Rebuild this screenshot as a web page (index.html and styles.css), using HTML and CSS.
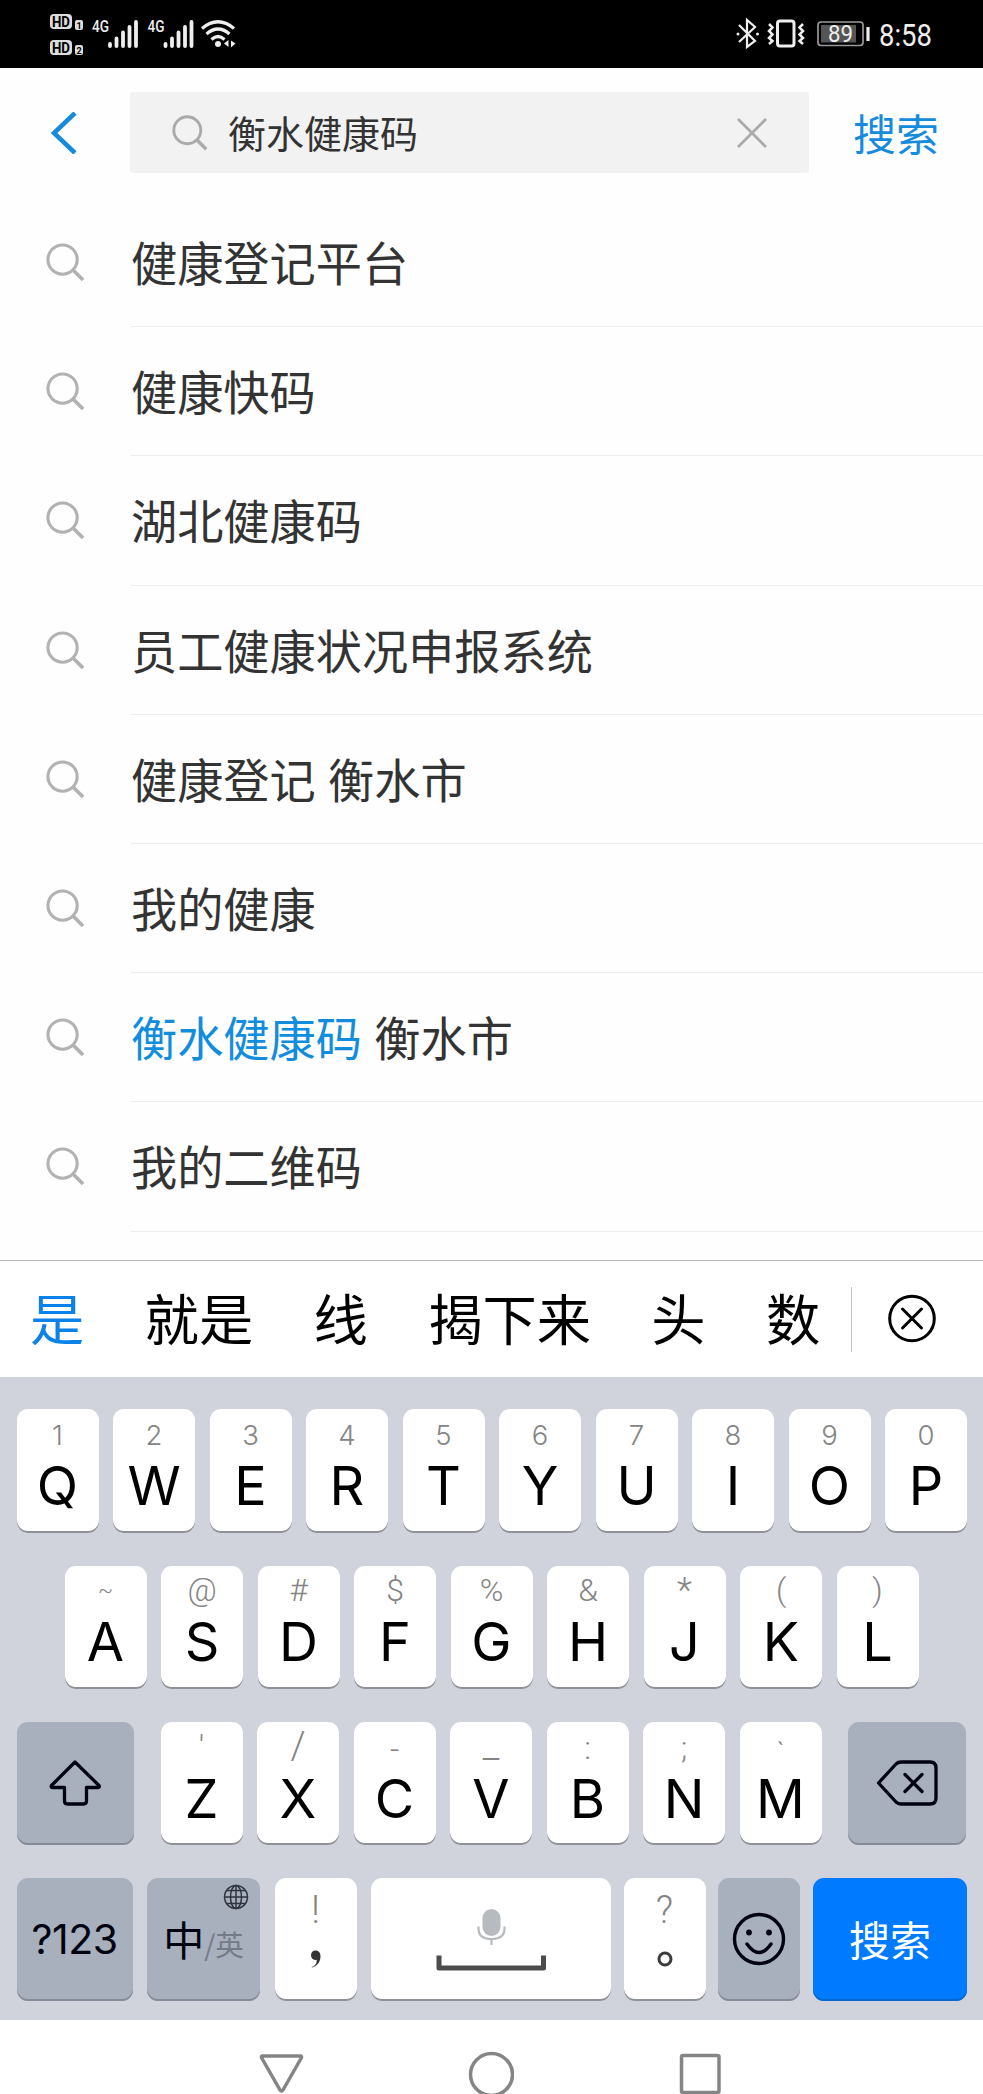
FILE: index.html
```html
<!DOCTYPE html>
<html lang="zh-CN">
<head>
<meta charset="utf-8">
<title>搜索</title>
<link rel="stylesheet" href="styles.css">
</head>
<body>
<svg class="defs" width="0" height="0" aria-hidden="true">
  <symbol id="lens" viewBox="0 0 40 40"><circle cx="17" cy="17" r="15" fill="none" stroke="currentColor" stroke-width="3.2"/><path d="M27.5 27.5L38 38" stroke="currentColor" stroke-width="3.8"/></symbol>
</svg>
<header class="status">
  <svg class="status-left" width="250" height="68" viewBox="0 0 250 68">
    <g fill="#ddd"><rect x="50" y="14" width="22" height="15" rx="4"/><rect x="50" y="40" width="22" height="15" rx="4"/><rect x="75" y="20" width="8" height="10" rx="2"/><rect x="75" y="45" width="8" height="10" rx="2"/></g>
    <g class="hd"><text x="52" y="26.500" textLength="18" lengthAdjust="spacingAndGlyphs">HD</text><text x="52" y="52.500" textLength="18" lengthAdjust="spacingAndGlyphs">HD</text><text class="sim" x="76.500" y="28.500">1</text><text class="sim" x="76.500" y="53.500">2</text></g>
    <g class="net"><text x="92" y="32" textLength="17" lengthAdjust="spacingAndGlyphs">4G</text><text x="147.500" y="32" textLength="17" lengthAdjust="spacingAndGlyphs">4G</text></g>
    <g stroke="#eee" stroke-width="3.800" stroke-linecap="round"><path d="M110 44v2M116.500 38.500V46M123 32.500V46M129.500 27V46M136 22V46"/><path d="M165.500 44v2M172 38.500V46M178.500 32.500V46M185 27V46M191.500 22V46"/></g>
    <g fill="none" stroke="#eee" stroke-width="3.200"><path d="M202 28.500Q218 15 234 28.500M206.500 34Q218 24 229.500 34M211.500 39.500Q218 33.500 224.500 39.500"/></g>
    <circle cx="218" cy="44" r="3" fill="#eee"/><path d="M228.500 40v7l-4.500-3.500zM231 40.500v7l4.500-4z" fill="#eee"/>
  </svg>
  <svg class="status-right" width="250" height="68" viewBox="733 0 250 68">
    <path d="M739 25l16 16-8 6V20l8 7-16 15" fill="none" stroke="#eee" stroke-width="2.200"/><circle cx="738" cy="34" r="1.500" fill="#eee"/><circle cx="757.500" cy="34" r="1.500" fill="#eee"/>
    <rect x="777.500" y="21" width="16.500" height="25" rx="2.500" fill="none" stroke="#eee" stroke-width="3"/>
    <path d="M769 24l3.500 3.500-3.500 3.500 3.500 3.500-3.500 3.500 3.500 3-3.500 3M803 24l-3.500 3.500 3.500 3.500-3.500 3.500 3.500 3.500-3.500 3 3.500 3" fill="none" stroke="#eee" stroke-width="2.500"/>
    <rect x="818" y="22" width="45" height="23.500" rx="3" fill="none" stroke="#999" stroke-width="1.700"/><rect x="821" y="25" width="35" height="17.500" fill="#555"/><path d="M868 27v14" stroke="#eee" stroke-width="3.200"/>
    <text class="battery" x="828" y="41.500" textLength="25" lengthAdjust="spacingAndGlyphs">89</text>
    <text class="clock" x="879" y="45.500" textLength="53" lengthAdjust="spacingAndGlyphs">8:58</text>
  </svg>
</header>
<div class="search-bar">
  <svg class="back" width="28" height="42" viewBox="0 0 28 42"><path d="M26 1L5 21l21 20" fill="none" stroke="#148bdc" stroke-width="4.500"/></svg>
  <div class="field">
    <svg class="field-lens" width="36" height="36"><use href="#lens"/></svg>
    <span class="query">衡水健康码</span>
    <svg class="clear" width="30" height="30" viewBox="0 0 30 30"><path d="M1 1l28 28M29 1L1 29" stroke="#aaa" stroke-width="2.700"/></svg>
  </div>
  <span class="submit">搜索</span>
</div>
<ul class="results">
  <li><svg class="lens"><use href="#lens"/></svg><span>健康登记平台</span></li>
  <li><svg class="lens"><use href="#lens"/></svg><span>健康快码</span></li>
  <li><svg class="lens"><use href="#lens"/></svg><span>湖北健康码</span></li>
  <li><svg class="lens"><use href="#lens"/></svg><span>员工健康状况申报系统</span></li>
  <li><svg class="lens"><use href="#lens"/></svg><span>健康登记 衡水市</span></li>
  <li><svg class="lens"><use href="#lens"/></svg><span>我的健康</span></li>
  <li><svg class="lens"><use href="#lens"/></svg><span><em>衡水健康码</em> 衡水市</span></li>
  <li><svg class="lens"><use href="#lens"/></svg><span>我的二维码</span></li>
</ul>
<div class="candidates">
  <span class="active">是</span><span>就是</span><span>线</span><span>揭下来</span><span>头</span><span>数</span>
  <i class="split"></i>
  <svg class="close" width="50" height="50" viewBox="0 0 50 50"><g fill="none" stroke="#000" stroke-width="3"><circle cx="25" cy="24.500" r="22.300"/><path d="M15.500 15l19 19M34.500 15l-19 19" stroke-linecap="round"/></g></svg>
</div>
<div class="keyboard">
  <div class="keys row1">
    <div class="key"><small>1</small><b>Q</b></div><div class="key"><small>2</small><b>W</b></div><div class="key"><small>3</small><b>E</b></div><div class="key"><small>4</small><b>R</b></div><div class="key"><small>5</small><b>T</b></div><div class="key"><small>6</small><b>Y</b></div><div class="key"><small>7</small><b>U</b></div><div class="key"><small>8</small><b>I</b></div><div class="key"><small>9</small><b>O</b></div><div class="key"><small>0</small><b>P</b></div>
  </div>
  <div class="keys row2">
    <div class="key"><small class="tilde">~</small><b>A</b></div><div class="key"><small>@</small><b>S</b></div><div class="key"><small>#</small><b>D</b></div><div class="key"><small>$</small><b>F</b></div><div class="key"><small>%</small><b>G</b></div><div class="key"><small>&amp;</small><b>H</b></div><div class="key"><small class="star">*</small><b>J</b></div><div class="key"><small>(</small><b>K</b></div><div class="key"><small>)</small><b>L</b></div>
  </div>
  <div class="keys row3">
    <div class="key gray shift"><svg width="54" height="48" viewBox="0 0 54 48"><path d="M27 3L3.500 26.500q-1 2 1 2H16.500V42q0 3 3 3h16q3 0 3-3V28.500h11.500q2 0 1-2z" fill="none" stroke="#000210" stroke-width="3.300" stroke-linejoin="round"/></svg></div>
    <div class="key"><small>'</small><b>Z</b></div><div class="key"><small class="slash">/</small><b>X</b></div><div class="key"><small class="dash">-</small><b>C</b></div><div class="key"><small class="under">_</small><b>V</b></div><div class="key"><small class="dots">:</small><b>B</b></div><div class="key"><small class="dots">;</small><b>N</b></div><div class="key"><small class="grave">ˋ</small><b>M</b></div>
    <div class="key gray delete"><svg width="62" height="46" viewBox="0 0 62 46"><g fill="none" stroke="#000210" stroke-width="3.300" stroke-linejoin="round" stroke-linecap="round"><path d="M2.500 23L20 4q2-2 5-2h29q6 0 6 6v30q0 6-6 6H25q-3 0-5-2z"/><path d="M29 14.500l17 17M46 14.500l-17 17"/></g></svg></div>
  </div>
  <div class="keys row4">
    <div class="key gray numeric">?123</div>
    <div class="key gray lang"><span>中</span><span class="alt">/英</span>
      <svg class="globe" width="26" height="26" viewBox="0 0 26 26"><g fill="none" stroke="#303640" stroke-width="1.500"><circle cx="13" cy="13" r="11.500"/><ellipse cx="13" cy="13" rx="5.500" ry="11.500"/><path d="M13 1.500v23M1.500 13h23M4 6.500h18M4 19.500h18"/></g></svg></div>
    <div class="key punct"><small>!</small><svg width="12" height="18" viewBox="0 0 12 18"><path d="M1.500 17C6 15.500 7 12.500 6.600 9.700 3.500 10.500 1 8.500 1 5.300 1 2.500 3 .5 5.500.5c3.500 0 5 2.500 5 6 0 5.500-3.500 9.500-8.300 11z" fill="#333"/></svg></div>
    <div class="key space"><svg width="112" height="64" viewBox="0 0 112 64"><rect x="47.500" y="1" width="18" height="27" rx="9" fill="#b7bbbf"/><path d="M43.500 18.500v2q0 10.500 13 10.500t13-10.500v-2M56.500 31v6" fill="none" stroke="#b7bbbf" stroke-width="2.200"/><path d="M4 47.500V60H108.500V47.500" fill="none" stroke="#4c4c4c" stroke-width="5" stroke-linejoin="round"/></svg></div>
    <div class="key punct"><small>?</small><svg width="16" height="18" viewBox="0 0 16 18"><circle cx="8" cy="9" r="6" fill="none" stroke="#3c3c3c" stroke-width="3"/></svg></div>
    <div class="key gray emoji"><svg width="54" height="54" viewBox="0 0 54 54"><circle cx="27" cy="27" r="24.500" fill="none" stroke="#000210" stroke-width="3.400"/><circle cx="17" cy="20.500" r="2.900" fill="#000210"/><circle cx="37" cy="20.500" r="2.900" fill="#000210"/><path d="M15 32q12 17 24 0" fill="none" stroke="#000210" stroke-width="3.400" stroke-linecap="round"/></svg></div>
    <div class="key go">搜索</div>
  </div>
</div>
<nav class="nav">
  <svg width="46" height="46" viewBox="0 0 46 46"><path d="M3 5h39q1 1 0 2.500L24 39q-1.500 2-3 0L3 7.500q-1-1.500 0-2.500z" fill="none" stroke="#858585" stroke-width="3.500" stroke-linejoin="round"/></svg>
  <svg width="46" height="46" viewBox="0 0 46 46"><circle cx="23.500" cy="23.500" r="21" fill="none" stroke="#858585" stroke-width="3.500"/></svg>
  <svg width="46" height="46" viewBox="0 0 46 46"><rect x="4.500" y="4.500" width="37.500" height="37" rx="1.500" fill="none" stroke="#858585" stroke-width="3.500"/></svg>
</nav>
</body>
</html>
```
FILE: styles.css
```css
* { box-sizing: border-box; }
body {
  margin: 0;
  width: 983px;
  height: 2094px;
  overflow: hidden;
  background: #fefefe;
  color: #333;
  font-family: "Noto Sans CJK SC", sans-serif;
  display: flex;
  flex-direction: column;
}
svg { display: block; flex: none; }
.defs { position: absolute; }

.status { flex: none; height: 68px; background: #000; display: flex; justify-content: space-between; }
.hd text { font: 700 14px Roboto, sans-serif; fill: #000; }
.hd .sim { font-size: 9px; }
.net text { font: 500 17px Roboto, sans-serif; fill: #eee; }
.battery { font: 400 23px Roboto, sans-serif; fill: #eee; }
.clock { font: 400 31px Roboto, sans-serif; fill: #eee; }

.search-bar { flex: none; height: 130px; padding: 24px 0 25px 49px; display: flex; align-items: center; }
.field { width: 679px; height: 81px; margin-left: 53px; padding: 0 42px; background: #f2f2f2; border-radius: 3px; display: flex; align-items: center; }
.field-lens { color: #aaa; }
.query { margin-left: 20px; padding-bottom: 2px; font-size: 38px; line-height: 60px; }
.clear { margin-left: auto; }
.submit { margin-left: 44px; padding-bottom: 2px; font-size: 43px; line-height: 60px; color: #148bdc; }

.results { flex: none; height: 1062px; margin: 0; padding: 0; list-style: none; }
.results li { height: 129.200px; padding-left: 46px; display: flex; align-items: center; }
.results span { flex: 1; height: 100%; margin-left: 46px; border-bottom: 1px solid #ededed; font-size: 46.200px; line-height: 126px; word-spacing: 2px; white-space: pre; }
.results em { font-style: normal; color: #128ddd; }
.lens { width: 39px; height: 39px; color: #b2b2b2; }

.candidates { flex: none; height: 117px; padding: 0 0 0 30px; border-top: 1px solid #b8b8b8; background: #fff; color: #000; display: flex; align-items: center; gap: 60.300px; font-size: 54.300px; line-height: 116px; white-space: nowrap; }
.candidates span { padding-bottom: 4px; line-height: 112px; }
.candidates .active { color: #0a82ea; }
.split { width: 1px; height: 65px; margin-left: -30px; background: #c4c4c4; }
.close { margin-left: -25px; }

.keyboard { flex: none; height: 643px; padding: 32px 16px 0 16.500px; background: #d0d3dc; display: flex; flex-direction: column; gap: 32.500px; }
.keys { display: flex; gap: 14.500px; height: 123.500px; }
.row2 { padding: 1px 0 0 48px; }
.row3 { padding-top: .5px; }
.row4 { padding-top: .5px; }
.key { position: relative; flex: none; width: 82px; height: 123.500px; border-radius: 11px; background: #fff; box-shadow: inset 0 -2px #8e9195; color: #000; display: flex; flex-direction: column; align-items: center; }
.row2 .key { height: 122.500px; }
.key small { height: 50px; font: 300 27.500px/53px Inter, sans-serif; color: #848484; }
.key b { font: 380 54px/54px Inter, sans-serif; }
.row2 small, .row3 small { font: 350 32px/49px Roboto, sans-serif; }
.row2 b { margin-top: -1px; }
.key .tilde { font-size: 22px; }
.key .star { font-size: 35px; line-height: 50px; }
.key .slash { font-size: 38px; }
.key .dash { line-height: 55px; }
.key .dots { line-height: 53px; }
.key .under { font-size: 38px; line-height: 46px; }
.key .grave { font-size: 24px; line-height: 58px; }
.key.gray { background: #a8afbd; box-shadow: inset 0 -2px #858b98; color: #000210; justify-content: center; }
.shift { width: 117.500px; margin-right: 12px; }
.delete { width: 118px; margin-left: 12px; }
.numeric { width: 116px; font: 380 41px Inter, sans-serif; letter-spacing: -.5px; }
.key.lang { width: 113px; padding-bottom: 2px; flex-direction: row; align-items: center; font-size: 41px; }
.lang .alt { font-size: 28.500px; color: #747b88; padding-top: 10px; }
.globe { position: absolute; top: 6px; right: 11px; }
.key.punct { justify-content: flex-start; }
.punct small { height: 72px; font: 300 38px/64px Roboto, sans-serif; }
.key.space { width: 240px; padding-top: 30px; }
.row4 .space + .punct { margin-left: -2px; }
.row4 .emoji { margin-left: -2px; }
.key.go { width: 154px; margin-left: -1.500px; padding-bottom: 2px; background: #007bff; box-shadow: inset 0 -2px #0868cd; color: #fff; justify-content: center; font-size: 41px; }

.nav { flex: none; height: 74px; padding: 31px 0 0 258.500px; display: flex; gap: 163px; background: #fff; overflow: hidden; }
```
